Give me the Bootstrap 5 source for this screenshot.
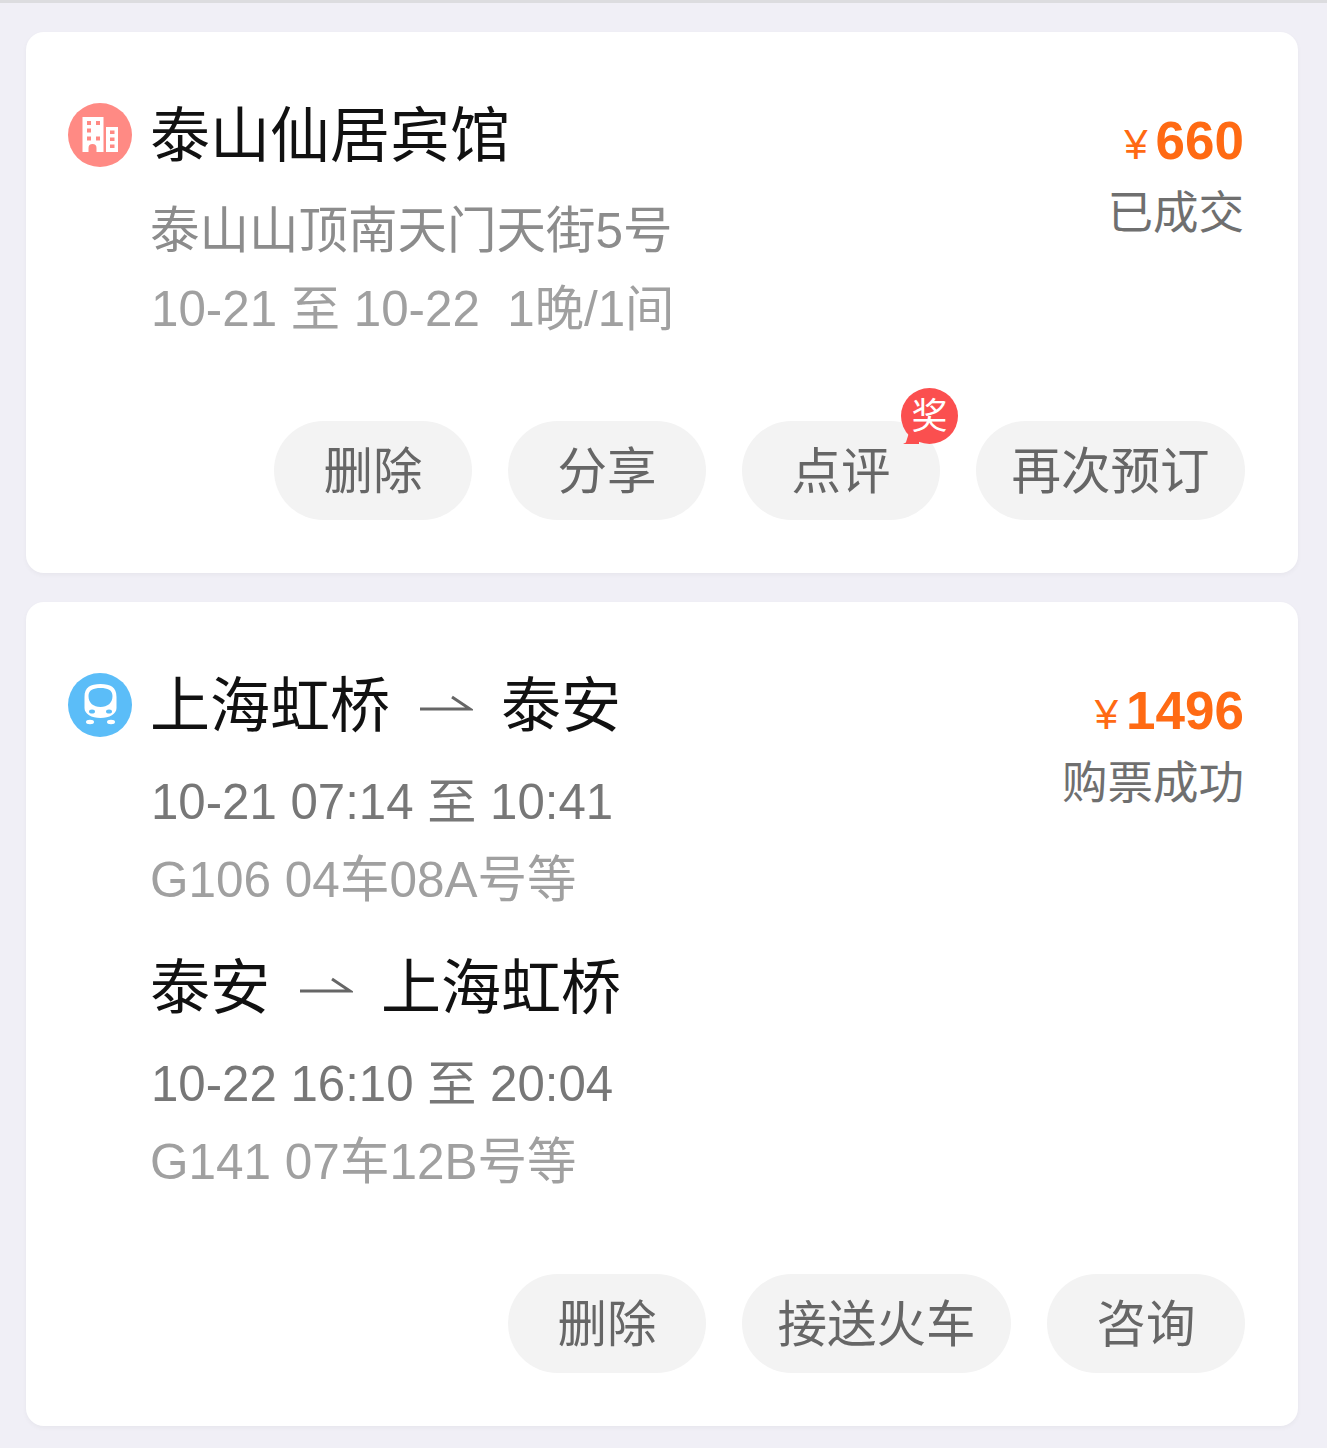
<!DOCTYPE html>
<html lang="zh-CN">
<head>
<meta charset="utf-8">
<title>订单</title>
<link rel="stylesheet" href="https://cdn.jsdelivr.net/npm/bootstrap@5.3.0/dist/css/bootstrap.min.css">
<style>
html,body{height:100%}
body{background:#f0eff6;font-family:"Liberation Sans","Noto Sans CJK SC",sans-serif;border-top:3px solid #dcdcdf;padding:29px 29px 0 26px;margin:0;overflow:hidden}
.order-card{background:#fff;border:0;border-radius:18px;box-shadow:0 2px 5px rgba(0,0,0,.04);padding:70px 53px 53px 42px;margin-bottom:29px}
.order-h1{height:541px}
.order-h2{height:824px}
.order-icon{width:64px;height:64px;flex:0 0 64px;margin-right:18px;margin-top:1px}
.order-body{min-width:0}
.order-title{font-size:60px;line-height:70px;color:#111;font-weight:400;margin:0;display:flex;align-items:center}
.order-sub{font-size:49.500px;line-height:56px;color:#8c8c8c;margin:0}
.order-time{color:#777;margin-top:32px;font-size:49.200px;padding-left:1px}
.order-sub2{color:#a0a0a0;margin-top:22px}
.order-addr{margin-top:31px}
.order-date{margin-top:22px;font-size:49.300px;padding-left:1px}
.order-return{margin-top:46px}
.order-arrow{margin:-6px 28.500px 0;flex:none}
.price-col{margin-right:1px}
.price-line{font-size:53px;line-height:60px;font-weight:700;color:#ff6a13;text-align:right;margin-top:9px}
.price-unit{font-size:42px;font-weight:400;margin-right:8px}
.order-state{font-size:45.500px;line-height:56px;color:#6f6f6f;text-align:right;margin-top:11px}
.action-row{gap:36px;justify-content:flex-end}
.action-btn{width:198px;height:99px;border-radius:50px;background:#f3f3f3;border:0;color:#666;font-size:49.500px;line-height:101px;padding:0;white-space:nowrap}
.action-wide{width:269px}
.prize-badge{position:absolute;left:159px;top:-33px;width:57px;height:56px;background:#fb4f4f;color:#fff;font-size:36px;line-height:58px;text-align:center;border-radius:50%;padding:0}
.prize-badge::after{content:"";position:absolute;left:2px;bottom:0;width:16px;height:10px;background:#fb4f4f;clip-path:polygon(35% 0,100% 40%,100% 100%,0 100%,18% 85%)}
</style>
</head>
<body>
<div class="card order-card order-h1">
  <div class="d-flex justify-content-between flex-grow-1">
    <div class="d-flex">
      <svg class="order-icon" viewBox="0 0 64 64" aria-hidden="true">
        <circle cx="32" cy="32" r="32" fill="#ff8a84"/>
        <path fill="#fff" d="M14.500 14h21v35h-7v-4a4 4 0 0 0-8 0v4h-6z"/>
        <path fill="#fff" d="M38 24h12v25H38z"/>
        <g fill="#ff8a84">
          <rect x="19" y="18" width="4" height="4"/><rect x="28" y="18" width="4" height="4"/>
          <rect x="19" y="25.500" width="4" height="4"/>
          <rect x="19" y="33.500" width="4" height="4"/><rect x="28" y="33.500" width="4" height="4"/>
          <rect x="42" y="27.500" width="4.500" height="3.500"/><rect x="42" y="34.500" width="4.500" height="3.500"/><rect x="42" y="41.500" width="4.500" height="3.500"/>
        </g>
      </svg>
      <div class="order-body">
        <h2 class="order-title">泰山仙居宾馆</h2>
        <p class="order-sub order-addr">泰山山顶南天门天街5号</p>
        <p class="order-sub order-sub2 order-date">10-21 至 10-22 &nbsp;1晚/1间</p>
      </div>
    </div>
    <div class="price-col">
      <div class="price-line"><span class="price-unit">¥</span>660</div>
      <div class="order-state">已成交</div>
    </div>
  </div>
  <div class="d-flex action-row">
    <button class="btn action-btn">删除</button>
    <button class="btn action-btn">分享</button>
    <button class="btn action-btn position-relative">点评<span class="prize-badge">奖</span></button>
    <button class="btn action-btn action-wide">再次预订</button>
  </div>
</div>
<div class="card order-card order-h2">
  <div class="d-flex justify-content-between flex-grow-1">
    <div class="d-flex">
      <svg class="order-icon" viewBox="0 0 64 64" aria-hidden="true">
        <circle cx="32" cy="32" r="32" fill="#5bbdf8"/>
        <path fill="#fff" fill-rule="evenodd" d="M32.500 11c10 0 16 3 16 13v11c0 6-7 10-16 10s-16-4-16-10V24c0-10 6-13 16-13zm0 4c-7 0-12 2-12 8 0 7 5 11 12 11s12-4 12-11c0-6-5-8-12-8z"/>
        <ellipse cx="24" cy="38.500" rx="3" ry="2" fill="#5bbdf8"/>
        <ellipse cx="41" cy="38.500" rx="3" ry="2" fill="#5bbdf8"/>
        <ellipse cx="22" cy="49" rx="4" ry="2.200" fill="#fff"/>
        <ellipse cx="43" cy="49" rx="4" ry="2.200" fill="#fff"/>
      </svg>
      <div class="order-body">
        <h2 class="order-title">上海虹桥<svg class="order-arrow" width="54" height="20" viewBox="0 0 54 20" aria-hidden="true"><path d="M1 15h50L33 3" fill="none" stroke="#666" stroke-width="3"/></svg>泰安</h2>
        <p class="order-sub order-time">10-21 07:14 至 10:41</p>
        <p class="order-sub order-sub2">G106 04车08A号等</p>
        <h2 class="order-title order-return">泰安<svg class="order-arrow" width="54" height="20" viewBox="0 0 54 20" aria-hidden="true"><path d="M1 15h50L33 3" fill="none" stroke="#666" stroke-width="3"/></svg>上海虹桥</h2>
        <p class="order-sub order-time">10-22 16:10 至 20:04</p>
        <p class="order-sub order-sub2">G141 07车12B号等</p>
      </div>
    </div>
    <div class="price-col">
      <div class="price-line"><span class="price-unit">¥</span>1496</div>
      <div class="order-state">购票成功</div>
    </div>
  </div>
  <div class="d-flex action-row">
    <button class="btn action-btn">删除</button>
    <button class="btn action-btn action-wide">接送火车</button>
    <button class="btn action-btn">咨询</button>
  </div>
</div>
<script src="https://cdn.jsdelivr.net/npm/bootstrap@5.3.0/dist/js/bootstrap.bundle.min.js"></script>
</body>
</html>
